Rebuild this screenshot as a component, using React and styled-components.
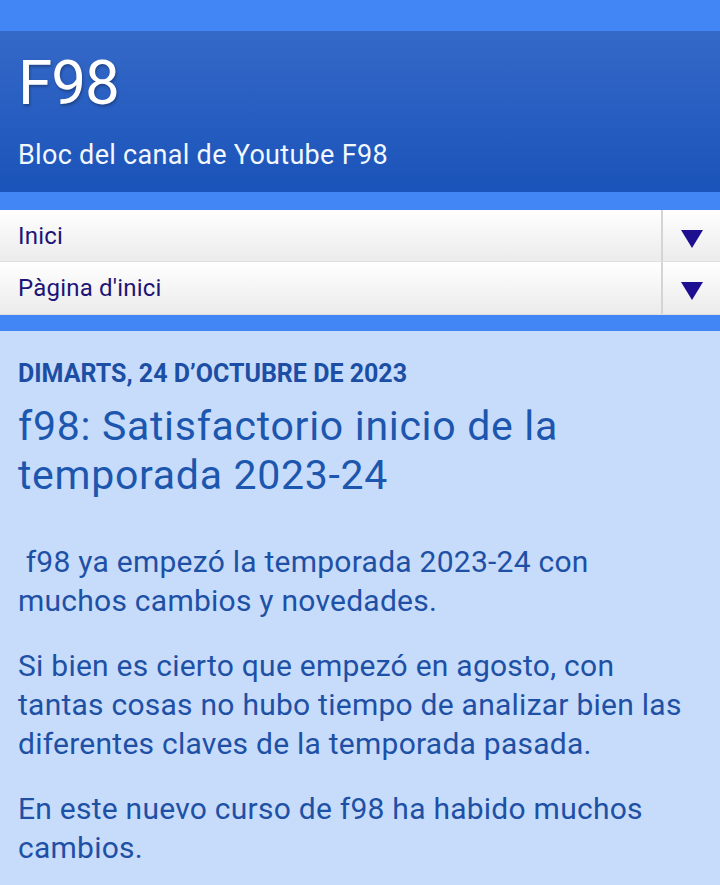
import React from "react";
import styled, { createGlobalStyle } from "styled-components";

const Global = createGlobalStyle`
  html, body { margin: 0; padding: 0; background: #c6dcfa; }
  body { font-family: Roboto, "Noto Sans", Arial, sans-serif; }
`;

const Page = styled.div`
  display: flex;
  flex-direction: column;
  min-height: 885px;
  background: #c6dcfa;
`;

const Band = styled.div`
  height: ${(p) => p.h}px;
  background: #4285f4;
`;

const Header = styled.header`
  height: 161px;
  box-sizing: border-box;
  padding: 17px 18px 0;
  background: linear-gradient(#3569c8, #1a53b9);
  color: #fff;
`;

const Title = styled.h1`
  margin: 0;
  font-size: 62px;
  font-weight: 400;
  line-height: 70px;
  letter-spacing: -1px;
  text-shadow: 1px 2px 3px rgba(0, 0, 0, 0.3);
`;

const Subtitle = styled.p`
  margin: 21px 0 0;
  font-size: 27px;
  line-height: 32px;
  letter-spacing: 0.3px;
  color: #f3f7ff;
`;

const Nav = styled.nav`
  display: flex;
  flex-direction: column;
`;

const NavRow = styled.div`
  display: flex;
  height: ${(p) => p.h}px;
  box-sizing: border-box;
  background: linear-gradient(#ffffff, #ebebeb);
  border-bottom: 1px solid #e0e0e0;
`;

const NavLabel = styled.div`
  flex: 1;
  display: flex;
  align-items: center;
  padding: 0 18px;
  font-size: 24px;
  letter-spacing: 0.2px;
  color: #1d1476;
  border-right: 2px solid #d4d4d4;
`;

const NavArrow = styled.div`
  width: 57px;
  display: flex;
  align-items: center;
  justify-content: center;
  padding-top: 6px;
  box-sizing: border-box;
`;

const Content = styled.main`
  padding: 28px 18px 0;
`;

const DateHeader = styled.h2`
  margin: 0;
  font-size: 25px;
  font-weight: 700;
  line-height: 30px;
  color: #1b4ea4;
  text-transform: uppercase;
`;

const PostTitle = styled.h3`
  margin: 13px 0 0;
  font-size: 41px;
  font-weight: 400;
  line-height: 49px;
  letter-spacing: 0.7px;
  color: #1c56ae;
`;

const Body = styled.div`
  margin-top: 42px;
  display: flex;
  flex-direction: column;
  gap: 26px;
`;

const Para = styled.p`
  margin: 0;
  font-size: 30px;
  line-height: 39px;
  letter-spacing: 0.25px;
  color: #1e50a6;
`;

const Triangle = () => (
  <svg width="24" height="20" viewBox="0 0 24 20">
    <polygon points="1,1 23,1 12,19" fill="#1e0f91" />
  </svg>
);

export default function App() {
  return (
    <>
      <Global />
      <Page>
        <Band h={31} />
        <Header>
          <Title>F98</Title>
          <Subtitle>Bloc del canal de Youtube F98</Subtitle>
        </Header>
        <Band h={18} />
        <Nav>
          <NavRow h={52}>
            <NavLabel>Inici</NavLabel>
            <NavArrow><Triangle /></NavArrow>
          </NavRow>
          <NavRow h={53}>
            <NavLabel>Pàgina d'inici</NavLabel>
            <NavArrow><Triangle /></NavArrow>
          </NavRow>
        </Nav>
        <Band h={16} />
        <Content>
          <DateHeader>Dimarts, 24 d’octubre de 2023</DateHeader>
          <PostTitle>f98: Satisfactorio inicio de la temporada 2023-24</PostTitle>
          <Body>
            <Para>&nbsp;f98 ya empezó la temporada 2023-24 con muchos cambios y novedades.</Para>
            <Para>Si bien es cierto que empezó en agosto, con tantas cosas no hubo tiempo de analizar bien las diferentes claves de la temporada pasada.</Para>
            <Para>En este nuevo curso de f98 ha habido muchos cambios.</Para>
          </Body>
        </Content>
      </Page>
    </>
  );
}
